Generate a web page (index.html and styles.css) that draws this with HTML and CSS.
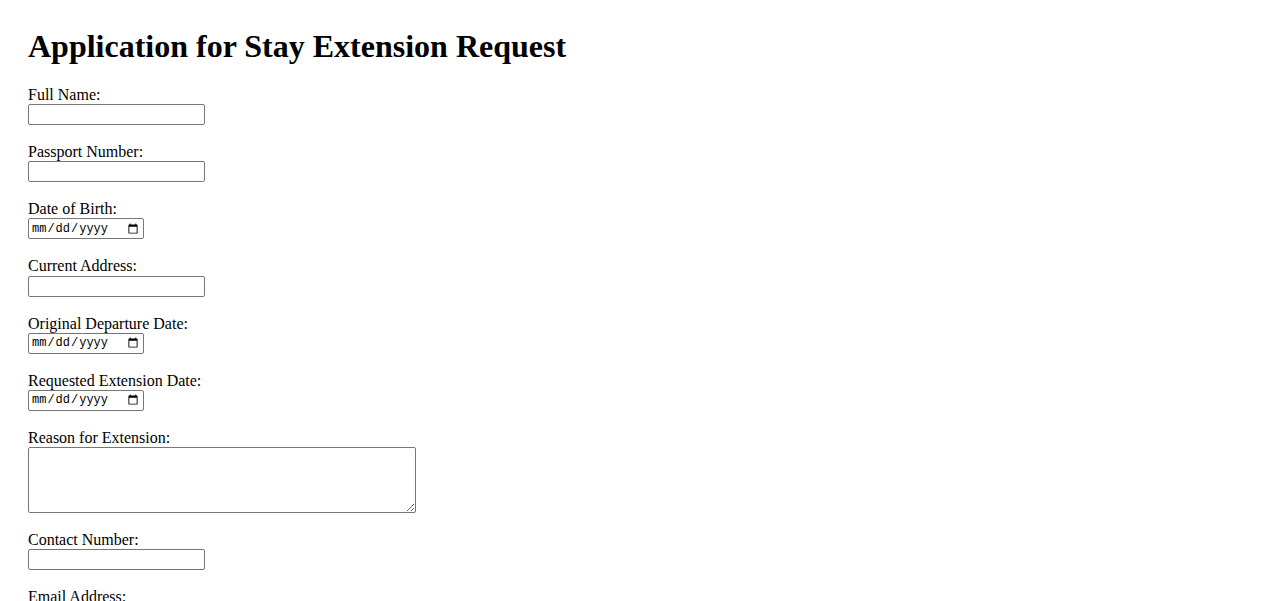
FILE: index.html
```html
<!DOCTYPE html>
<html lang="en">
<head>
<meta charset="utf-8">
<title>Application for Stay Extension Request</title>
<link rel="stylesheet" href="styles.css">
</head>
<body>
<h1 class="title">Application for Stay Extension Request</h1>
<form class="form">
  <div class="group">
    <label class="label" for="fullName">Full Name:</label>
    <input class="field text" type="text" id="fullName">
  </div>
  <div class="group">
    <label class="label" for="passport">Passport Number:</label>
    <input class="field text" type="text" id="passport">
  </div>
  <div class="group">
    <label class="label" for="dob">Date of Birth:</label>
    <input class="field date" type="date" id="dob">
  </div>
  <div class="group">
    <label class="label" for="address">Current Address:</label>
    <input class="field text" type="text" id="address">
  </div>
  <div class="group">
    <label class="label" for="departure">Original Departure Date:</label>
    <input class="field date" type="date" id="departure">
  </div>
  <div class="group">
    <label class="label" for="extension">Requested Extension Date:</label>
    <input class="field date" type="date" id="extension">
  </div>
  <div class="group">
    <label class="label" for="reason">Reason for Extension:</label>
    <textarea class="field area" id="reason"></textarea>
  </div>
  <div class="group">
    <label class="label" for="contact">Contact Number:</label>
    <input class="field text" type="tel" id="contact">
  </div>
  <div class="group">
    <label class="label" for="email">Email Address:</label>
    <input class="field text" type="email" id="email">
  </div>
  <button class="submit" type="submit">Submit Application</button>
</form>
</body>
</html>
```

FILE: styles.css
```css
html, body {
  background: #ffffff;
}
body {
  margin: 0;
  padding: 28px;
  font-family: "Liberation Serif", "Times New Roman", serif;
  font-size: 16px;
  color: #000000;
}
.title {
  margin: 0 0 21px 0;
  font-size: 32px;
  font-weight: bold;
  line-height: 37px;
}
.form {
  display: flex;
  flex-direction: column;
  align-items: flex-start;
}
.group {
  display: flex;
  flex-direction: column;
  align-items: flex-start;
  margin-bottom: 18px;
}
.label {
  line-height: 18.14px;
}
.field {
  box-sizing: border-box;
  margin: 0;
  border: 1px solid #767676;
  border-radius: 2px;
  background: #ffffff;
  font-family: "Liberation Sans", Arial, sans-serif;
  font-size: 13.333px;
  padding: 1px 2px;
}
.text {
  width: 177px;
  height: 21px;
}
.date {
  width: 116px;
  height: 21px;
  font-family: "Liberation Mono", "DejaVu Sans Mono", monospace;
  font-size: 12px;
}
.area {
  width: 388px;
  height: 66px;
  font-family: "Liberation Mono", monospace;
}
.submit {
  font-family: "Liberation Sans", Arial, sans-serif;
  font-size: 13.333px;
}
```
